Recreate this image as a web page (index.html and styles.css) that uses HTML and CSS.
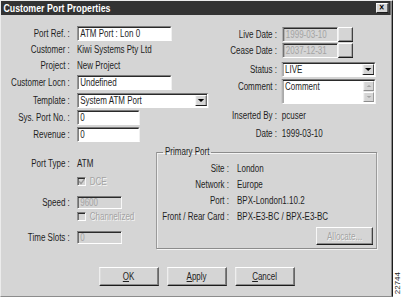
FILE: index.html
```html
<!DOCTYPE html>
<html lang="en">
<head>
    <meta charset="UTF-8">
    <meta name="viewport" content="width=device-width, initial-scale=1.0">
    <title>Customer Port Properties</title>
    <link rel="stylesheet" href="styles.css">
</head>
<body>
<div class="screen">
    <div class="dialog">
        <div class="sheet">
            <div class="titlebar">
                <span class="title">Customer Port Properties</span>
                <span class="closeBtn">&#x2715;</span>
            </div>

            <div class="content">
                <div class="top">
                    <div class="form leftTop">
                        <label>Port Ref. :</label>
                        <div class="field w94">ATM Port : Lon 0</div>

                        <label>Customer :</label>
                        <span class="value">Kiwi Systems Pty Ltd</span>

                        <label>Project :</label>
                        <span class="value">New Project</span>

                        <label>Customer Locn :</label>
                        <div class="field w94">Undefined</div>

                        <label>Template :</label>
                        <div class="field select w131">System ATM Port<span class="drop"></span></div>

                        <label>Sys. Port No. :</label>
                        <div class="field w62">0</div>

                        <label>Revenue :</label>
                        <div class="field w62">0</div>
                    </div>

                    <div class="form rightTop">
                        <label>Live Date :</label>
                        <div class="dateRow">
                            <div class="field disabled w55">1999-03-10</div>
                            <span class="smallBtn"></span>
                        </div>

                        <label>Cease Date :</label>
                        <div class="dateRow">
                            <div class="field disabled w55">2037-12-31</div>
                            <span class="smallBtn"></span>
                        </div>

                        <label>Status :</label>
                        <div class="field select w93">LIVE<span class="drop"></span></div>

                        <label>Comment :</label>
                        <div class="field memo w93">
                            <span>Comment</span>
                            <div class="scroll">
                                <span class="arrow up"></span>
                                <span class="arrow down"></span>
                            </div>
                        </div>

                        <label>Inserted By :</label>
                        <span class="value">pcuser</span>

                        <label>Date :</label>
                        <span class="value">1999-03-10</span>
                    </div>
                </div>

                <div class="lower">
                    <div class="form leftLower">
                        <label>Port Type :</label>
                        <span class="value">ATM</span>

                        <span></span>
                        <div class="check">
                            <span class="box">
                                <svg width="8" height="7" viewBox="0 0 8 7"><path d="M0.8 3.4 L3 5.6 L7.4 1" fill="none" stroke="#9a9a9a" stroke-width="1.5"/></svg>
                            </span>
                            <span class="greyText">DCE</span>
                        </div>

                        <label>Speed :</label>
                        <div class="field disabled short w45">9600</div>

                        <span></span>
                        <div class="check">
                            <span class="box"></span>
                            <span class="greyText">Channelized</span>
                        </div>

                        <label>Time Slots :</label>
                        <div class="field disabled short w45">0</div>
                    </div>

                    <fieldset class="group">
                        <legend>Primary Port</legend>
                        <div class="groupGrid">
                            <label>Site :</label>
                            <span>London</span>
                            <label>Network :</label>
                            <span>Europe</span>
                            <label>Port :</label>
                            <span>BPX-London1.10.2</span>
                            <label>Front / Rear Card :</label>
                            <span>BPX-E3-BC / BPX-E3-BC</span>
                        </div>
                        <div class="btn allocate">Allocate...</div>
                    </fieldset>
                </div>

                <div class="actions">
                    <div class="btn"><u>O</u>K</div>
                    <div class="btn"><u>A</u>pply</div>
                    <div class="btn"><u>C</u>ancel</div>
                </div>
            </div>
        </div>
    </div>
    <div class="strip"><span>22744</span></div>
</div>
</body>
</html>
```

FILE: styles.css
```css
* { box-sizing: border-box; }

body {
    margin: 0;
    background: #fff;
    font-family: "Liberation Sans", Arial, sans-serif;
    font-size: 10px;
    color: #1e1e1e;
}

.screen {
    display: flex;
    width: 402px;
    height: 298px;
}

.dialog {
    width: 393px;
    height: 297px;
    background: #d5d5d5;
    border: 1px solid;
    border-color: #ececec #1c1c1c #8c8c8c #ececec;
    box-shadow: inset -1px 0 0 #8c8c8c;
    overflow: hidden;
}

/* the old dialog font is narrow, so the sheet is squeezed sideways
   (all widths below are before the squeeze) */
.sheet {
    width: 489px;
    transform: scaleX(0.8);
    transform-origin: 0 0;
}

/* title bar */
.titlebar {
    height: 14px;
    margin-right: 2px;
    background: #333;
    display: flex;
    align-items: center;
    justify-content: space-between;
    padding: 0 3px 0 3px;
}
.title {
    color: #fff;
    font-weight: bold;
    font-size: 11px;
}
.closeBtn {
    width: 15px;
    height: 10px;
    background: #d5d5d5;
    border: 1px solid;
    border-color: #fff #1c1c1c #1c1c1c #fff;
    font-size: 8px;
    font-weight: bold;
    line-height: 8px;
    text-align: center;
    color: #000;
}

.content {
    padding-top: 11px;
}

/* forms */
.form {
    display: grid;
    align-items: start;
}
.form label,
.form .value {
    line-height: 15px;
    white-space: nowrap;
}
.form label { text-align: right; }

.top {
    display: flex;
    padding-left: 5px;
}

.leftTop {
    width: 256px;
    grid-template-columns: 81px 1fr;
    column-gap: 9px;
    grid-template-rows: 16px 16px 17px 18px 17px 17px 15px;
}

.rightTop {
    width: 209px;
    padding-top: 1px;
    grid-template-columns: 84px 1fr;
    column-gap: 6px;
    grid-template-rows: 16px 19px 17px 29px 18px 15px;
}

.field {
    height: 15px;
    background: #fff;
    border: 1px solid;
    border-color: #7c7c7c #fff #fff #7c7c7c;
    box-shadow: inset 1px 1px 0 #2a2a2a;
    padding: 0 2px 0 3px;
    line-height: 13px;
    white-space: nowrap;
    overflow: hidden;
    position: relative;
}
.field.disabled {
    background: #d5d5d5;
    color: #a4a4a4;
}
.field.short { height: 13px; line-height: 11px; }

.w45 { width: 56px; }
.w55 { width: 69px; }
.w62 { width: 78px; }
.w93 { width: 117px; }
.w94 { width: 118px; }
.w131 { width: 164px; }

.dateRow {
    display: flex;
    padding-left: 1px;
}
.smallBtn {
    width: 19px;
    height: 15px;
    background: #d5d5d5;
    border: 1px solid;
    border-color: #fff #1c1c1c #1c1c1c #fff;
    box-shadow: inset -1px -1px 0 #8c8c8c;
}

.select .drop {
    position: absolute;
    right: 1px;
    top: 1px;
    width: 14px;
    height: 11px;
    background: #d5d5d5;
    border: 1px solid;
    border-color: #fff #1c1c1c #1c1c1c #fff;
}
.select .drop::after {
    content: "";
    position: absolute;
    left: 2px;
    top: 3px;
    border-left: 4px solid transparent;
    border-right: 4px solid transparent;
    border-top: 3px solid #000;
}

.memo {
    height: 25px;
    display: flex;
    justify-content: space-between;
    padding-right: 1px;
}
.scroll {
    width: 13px;
    height: 21px;
    margin-top: 1px;
    display: flex;
    flex-direction: column;
    justify-content: space-between;
    background: #e6e6e6;
}
.arrow {
    height: 10px;
    background: #d5d5d5;
    border: 1px solid;
    border-color: #fff #8c8c8c #8c8c8c #fff;
    position: relative;
}
.arrow::after {
    content: "";
    position: absolute;
    left: 3px;
    border-left: 3px solid transparent;
    border-right: 3px solid transparent;
}
.arrow.up::after { top: 3px; border-bottom: 2px solid #a4a4a4; }
.arrow.down::after { top: 3px; border-top: 2px solid #a4a4a4; }

/* lower part */
.lower {
    display: flex;
    margin-top: 4px;
    padding-left: 5px;
}

.leftLower {
    width: 189px;
    padding-top: 10px;
    grid-template-columns: 81px 1fr;
    column-gap: 9px;
    grid-template-rows: 18px 22px 13px 22px 13px;
}
.leftLower label { line-height: 13px; }
.leftLower label:first-child { line-height: 15px; }

.check {
    display: flex;
    align-items: center;
    height: 15px;
    gap: 5px;
}
.box {
    width: 11px;
    height: 9px;
    background: #d5d5d5;
    border: 1px solid;
    border-color: #7c7c7c #fff #fff #7c7c7c;
    box-shadow: inset 1px 1px 0 #2a2a2a;
    display: flex;
    align-items: center;
    justify-content: center;
}
.greyText {
    color: #a4a4a4;
    text-shadow: 1px 1px 0 #f4f4f4;
}

.group {
    width: 276px;
    margin: 0;
    padding: 0 4px 3px 4px;
    border: 1px solid #8c8c8c;
    box-shadow: 1px 1px 0 #f4f4f4, inset 1px 1px 0 #f4f4f4;
    display: flex;
    flex-direction: column;
}
.group legend {
    margin-left: 4px;
    padding: 0 2px;
    line-height: 12px;
}
.groupGrid {
    display: grid;
    margin-top: 3px;
    grid-template-columns: 86px 1fr;
    column-gap: 10px;
    grid-auto-rows: 16px;
    line-height: 15px;
    white-space: nowrap;
}
.groupGrid label { text-align: right; }

.btn {
    height: 19px;
    width: 74px;
    background: #d5d5d5;
    border: 1px solid;
    border-color: #fff #1c1c1c #1c1c1c #fff;
    box-shadow: inset -1px -1px 0 #8c8c8c;
    text-align: center;
    line-height: 17px;
}
.allocate {
    align-self: flex-end;
    width: 71px;
    height: 18px;
    margin-top: 2px;
    color: #a4a4a4;
    text-shadow: 1px 1px 0 #f4f4f4;
}

.actions {
    display: flex;
    justify-content: center;
    gap: 11px;
    margin-top: 18px;
}

/* figure number at the side */
.strip {
    width: 9px;
    display: flex;
    align-items: flex-end;
    justify-content: center;
    padding-bottom: 4px;
}
.strip span {
    writing-mode: vertical-rl;
    transform: rotate(180deg);
    font-size: 8px;
    color: #222;
}
```
